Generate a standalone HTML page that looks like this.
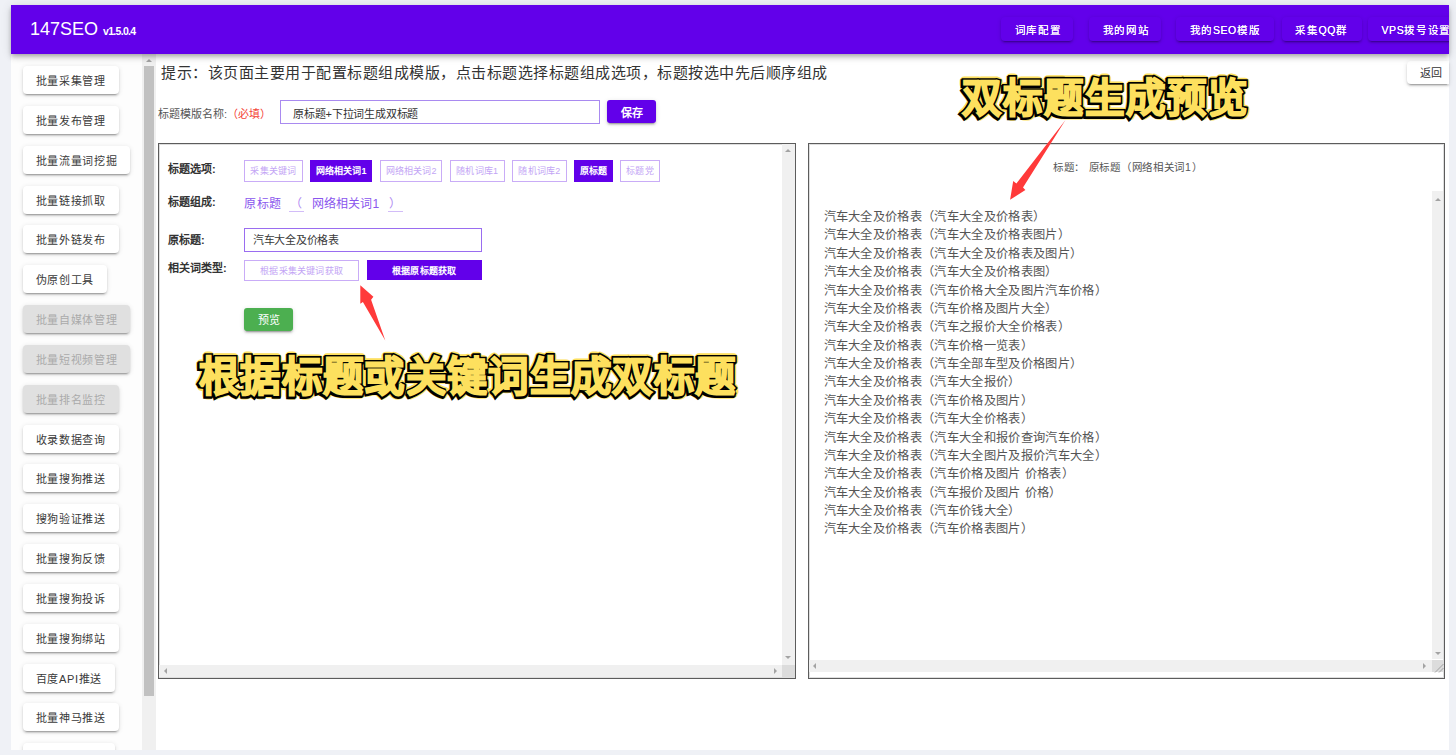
<!DOCTYPE html>
<html lang="zh-CN"><head><meta charset="utf-8">
<style>
*{box-sizing:border-box;margin:0;padding:0}
html,body{width:1456px;height:755px;overflow:hidden;background:#eff1f6;font-family:"Liberation Sans",sans-serif}
.abs{position:absolute}
#hdr{left:11px;top:5px;width:1438px;height:48.6px;overflow:hidden;background:#6200ea;box-shadow:0 2px 4px -1px rgba(0,0,0,.2),0 4px 5px 0 rgba(0,0,0,.14),0 1px 10px 0 rgba(0,0,0,.12);z-index:5}
#logo{left:19px;top:14px;color:#fff;font-size:18px;white-space:nowrap}
#logo small{font-size:10.5px;font-weight:bold;margin-left:5px;letter-spacing:-0.7px}
.hb{top:12px;height:24px;background:#6200ea;color:#fff;font-size:10.5px;font-weight:500;letter-spacing:1.7px;text-shadow:0 0 .5px #fff;border-radius:4px;box-shadow:0 3px 1px -2px rgba(0,0,0,.2),0 2px 2px 0 rgba(0,0,0,.14),0 1px 5px 0 rgba(0,0,0,.12);padding-left:13.5px;line-height:27px;white-space:nowrap}
#side{left:11px;top:53px;width:131px;height:697px;background:#fdfdfd}
#sbar{left:142px;top:53px;width:14px;height:697px;background:#f0f0f0}
#sthumb{left:144px;top:66px;width:10px;height:630px;background:#c1c1c1}
#main{left:156px;top:53px;width:1293px;height:697px;background:#fff}
.sb{left:22.5px;height:28px;background:#fff;border-radius:4px;font-size:11px;letter-spacing:.7px;color:#3a3a3a;line-height:30px;padding:0 13px;white-space:nowrap;box-shadow:0 3px 1px -2px rgba(0,0,0,.2),0 2px 2px 0 rgba(0,0,0,.14),0 1px 5px 0 rgba(0,0,0,.12)}
.sb.dis{background:#e0e0e0;color:#aaa}

.tip{left:161px;top:63px;font-size:15px;letter-spacing:0.5px;color:#333;white-space:nowrap;line-height:20px}
.lbl{font-size:11px;color:#555;white-space:nowrap}
.inp{border:1.5px solid #a98af0;background:#fff}
.btnp{background:#6200ea;color:#fff;font-weight:bold;font-size:11px;text-align:center;border-radius:3px;box-shadow:0 3px 1px -2px rgba(0,0,0,.2),0 2px 2px 0 rgba(0,0,0,.14),0 1px 5px 0 rgba(0,0,0,.12)}
.panel{border:1px solid #5c5c5c;background:#fff;box-shadow:inset 0 0 0 1px rgba(0,0,0,.13)}
.blbl{font-size:11px;font-weight:bold;color:#333;white-space:nowrap;line-height:14px}
.chip{top:160px;height:21.6px;border:1px solid #c9acf7;color:#c3a5f5;font-size:9px;letter-spacing:0.2px;text-align:center;line-height:20.8px;white-space:nowrap}
.chip.sel{background:#6200ea;border-color:#6200ea;color:#fff;font-weight:bold}
.vs{background:#f0f0f0}
.tri-up{width:0;height:0;border-left:3.5px solid transparent;border-right:3.5px solid transparent;border-bottom:3.5px solid #a3a3a3}
.tri-dn{width:0;height:0;border-left:3.5px solid transparent;border-right:3.5px solid transparent;border-top:3.5px solid #a3a3a3}
.tri-l{width:0;height:0;border-top:3.5px solid transparent;border-bottom:3.5px solid transparent;border-right:3.5px solid #a3a3a3}
.tri-r{width:0;height:0;border-top:3.5px solid transparent;border-bottom:3.5px solid transparent;border-left:3.5px solid #a3a3a3}
.res{left:823.5px;top:208px;font-size:12.25px;letter-spacing:0.33px;line-height:18.37px;color:#555;white-space:pre}
</style></head><body>
<div id="hdr" class="abs">
  <div id="logo" class="abs">147SEO<small>v1.5.0.4</small></div>
  <div class="hb abs" style="left:990px;width:72px">词库配置</div>
  <div class="hb abs" style="left:1078px;width:72px">我的网站</div>
  <div class="hb abs" style="left:1165px;width:97.5px">我的<span style="letter-spacing:.6px">SEO</span>模版</div>
  <div class="hb abs" style="left:1270.7px;width:80px">采集<span style="letter-spacing:.6px">QQ</span>群</div>
  <div class="hb abs" style="left:1357px;width:100px"><span style="letter-spacing:.6px">VPS</span>拨号设置</div>
</div>
<div id="side" class="abs"></div>
<div id="sbar" class="abs"></div>
<div id="sthumb" class="abs"></div>
<div class="abs tri-up" style="left:145.5px;top:59px"></div>
<div class="abs" style="left:155.5px;top:53px;width:1px;height:697px;background:#e6e6e6"></div>
<div id="main" class="abs"></div>
<div class="sb abs" style="top:66.00px">批量采集管理</div>
<div class="sb abs" style="top:105.84px">批量发布管理</div>
<div class="sb abs" style="top:145.68px">批量流量词挖掘</div>
<div class="sb abs" style="top:185.52px">批量链接抓取</div>
<div class="sb abs" style="top:225.36px">批量外链发布</div>
<div class="sb abs" style="top:265.20px">伪原创工具</div>
<div class="sb abs dis" style="top:305.04px">批量自媒体管理</div>
<div class="sb abs dis" style="top:344.88px">批量短视频管理</div>
<div class="sb abs dis" style="top:384.72px">批量排名监控</div>
<div class="sb abs" style="top:424.56px">收录数据查询</div>
<div class="sb abs" style="top:464.40px">批量搜狗推送</div>
<div class="sb abs" style="top:504.24px">搜狗验证推送</div>
<div class="sb abs" style="top:544.08px">批量搜狗反馈</div>
<div class="sb abs" style="top:583.92px">批量搜狗投诉</div>
<div class="sb abs" style="top:623.76px">批量搜狗绑站</div>
<div class="sb abs" style="top:663.60px">百度API推送</div>
<div class="sb abs" style="top:703.44px">批量神马推送</div>
<div class="sb abs" style="top:743.28px;width:92px">&nbsp;</div>

<div class="abs tip">提示：该页面主要用于配置标题组成模版，点击标题选择标题组成选项，标题按选中先后顺序组成</div>
<div class="abs" style="left:1407px;top:61px;width:42px;height:22.5px;background:#fff;border-radius:4px 0 0 4px;box-shadow:0 3px 1px -2px rgba(0,0,0,.2),0 2px 2px 0 rgba(0,0,0,.14),0 1px 5px 0 rgba(0,0,0,.12);font-size:11px;color:#333;line-height:24px;padding-left:13px">返回</div>
<div class="abs lbl" style="left:158px;top:105px">标题模版名称:<span style="color:#f44336">（必填）</span></div>
<div class="abs inp" style="left:280px;top:99.6px;width:319.5px;height:24.2px"></div>
<div class="abs lbl" style="left:293px;top:104.5px;color:#333;font-size:11px;letter-spacing:-0.18px">原标题+下拉词生成双标题</div>
<div class="abs btnp" style="left:607px;top:100.3px;width:49px;height:22.8px;line-height:26px">保存</div>

<div class="abs panel" style="left:158px;top:142.8px;width:637.8px;height:536.3px"></div>
<div class="abs vs" style="left:782px;top:143.8px;width:12.8px;height:521px"></div>
<div class="abs tri-up" style="left:784.8px;top:149px"></div>
<div class="abs tri-dn" style="left:784.8px;top:656px"></div>
<div class="abs vs" style="left:159px;top:665px;width:623px;height:12.3px"></div>
<div class="abs" style="left:782px;top:665px;width:12.8px;height:12.3px;background:#dcdcdc"></div>
<div class="abs tri-l" style="left:163.5px;top:668px"></div>
<div class="abs tri-r" style="left:773.5px;top:668px"></div>

<div class="abs blbl" style="left:168px;top:162px">标题选项:</div>
<div class="abs chip" style="left:244.2px;width:58.6px">采集关键词</div>
<div class="abs chip sel" style="left:310px;width:62.4px">网络相关词1</div>
<div class="abs chip" style="left:379.9px;width:62.6px">网络相关词2</div>
<div class="abs chip" style="left:450px;width:54.6px">随机词库1</div>
<div class="abs chip" style="left:512.2px;width:54.4px">随机词库2</div>
<div class="abs chip sel" style="left:574.2px;width:38.6px">原标题</div>
<div class="abs chip" style="left:620.2px;width:39.6px">标题党</div>

<div class="abs blbl" style="left:168px;top:194.5px">标题组成:</div>
<div class="abs" style="left:244.2px;top:197px;font-size:12px;letter-spacing:0.5px;color:#8a56ee;white-space:nowrap;line-height:15px">原标题</div>
<div class="abs" style="left:288.7px;top:195px;width:15.3px;height:17px;border-bottom:1px solid #d2bcf8;font-size:12px;color:#b08af2;line-height:19px;text-align:right;padding-right:2px">（</div>
<div class="abs" style="left:311.5px;top:197px;font-size:12px;letter-spacing:0.2px;color:#8a56ee;white-space:nowrap;line-height:15px">网络相关词1</div>
<div class="abs" style="left:387.5px;top:195px;width:15px;height:17px;border-bottom:1px solid #d2bcf8;font-size:12px;color:#b08af2;line-height:19px;padding-left:1.5px">）</div>

<div class="abs blbl" style="left:168px;top:233px">原标题:</div>
<div class="abs inp" style="left:244.2px;top:227.7px;width:237.5px;height:24.1px;border-color:#9a6df0"></div>
<div class="abs" style="left:253px;top:232.5px;font-size:11px;letter-spacing:-0.3px;color:#3a3a3a;white-space:nowrap;line-height:14px">汽车大全及价格表</div>

<div class="abs blbl" style="left:168px;top:261px">相关词类型:</div>
<div class="abs chip" style="left:244.2px;top:259.7px;width:114.9px;height:20.9px;line-height:21px;font-size:9px">根据采集关键词获取</div>
<div class="abs chip sel" style="left:366.8px;top:260.2px;width:114.9px;height:19.9px;line-height:21px;font-size:9px">根据原标题获取</div>

<div class="abs" style="left:244.2px;top:308px;width:48.7px;height:22.9px;background:#4caf50;border-radius:3px;color:#fff;font-size:11px;text-align:center;line-height:25px;box-shadow:0 3px 1px -2px rgba(0,0,0,.2),0 2px 2px 0 rgba(0,0,0,.14),0 1px 5px 0 rgba(0,0,0,.12)">预览</div>

<div class="abs panel" style="left:807.7px;top:142.8px;width:637.5px;height:536.3px"></div>
<div class="abs" style="left:1053px;top:160px;font-size:10.5px;letter-spacing:0.7px;color:#555;white-space:nowrap;line-height:14px">标题：&nbsp;原标题（网络相关词1）</div>
<div class="abs vs" style="left:1431.6px;top:191.4px;width:11.6px;height:468px"></div>
<div class="abs tri-up" style="left:1434.5px;top:197.5px"></div>
<div class="abs tri-dn" style="left:1434.5px;top:651.5px"></div>
<div class="abs vs" style="left:809px;top:659.5px;width:622.6px;height:12.5px"></div>
<div class="abs" style="left:1431.6px;top:659.5px;width:11.6px;height:12.5px;background:#dcdcdc"></div>
<div class="abs tri-l" style="left:813px;top:662.5px"></div>
<div class="abs tri-r" style="left:1422.5px;top:662.5px"></div>
<svg class="abs" style="left:1431.6px;top:659.5px" width="12" height="13"><path d="M3,12.5 L11.5,4 M7,12.5 L11.5,8" stroke="#9a9a9a" stroke-width="0.9" fill="none"/></svg>
<div class="abs res">汽车大全及价格表（汽车大全及价格表）
汽车大全及价格表（汽车大全及价格表图片）
汽车大全及价格表（汽车大全及价格表及图片）
汽车大全及价格表（汽车大全及价格表图）
汽车大全及价格表（汽车价格大全及图片汽车价格）
汽车大全及价格表（汽车价格及图片大全）
汽车大全及价格表（汽车之报价大全价格表）
汽车大全及价格表（汽车价格一览表）
汽车大全及价格表（汽车全部车型及价格图片）
汽车大全及价格表（汽车大全报价）
汽车大全及价格表（汽车价格及图片）
汽车大全及价格表（汽车大全价格表）
汽车大全及价格表（汽车大全和报价查询汽车价格）
汽车大全及价格表（汽车大全图片及报价汽车大全）
汽车大全及价格表（汽车价格及图片 价格表）
汽车大全及价格表（汽车报价及图片 价格）
汽车大全及价格表（汽车价钱大全）
汽车大全及价格表（汽车价格表图片）</div>

<svg class="abs" style="left:0;top:0;z-index:10" width="1456" height="755" viewBox="0 0 1456 755">
<g font-family="Liberation Sans, sans-serif" font-weight="900">
<g fill="#fde05e" stroke="#fde05e" stroke-width="8" stroke-linejoin="round"><text x="961.5" y="112" font-size="39.5" textLength="286" lengthAdjust="spacing">双标题生成预览</text></g>
<g fill="#000" stroke="#000" stroke-width="4.8" stroke-linejoin="miter" stroke-miterlimit="2" transform="translate(-0.8,1)"><text x="961.5" y="112" font-size="39.5" textLength="286" lengthAdjust="spacing">双标题生成预览</text></g>
<g fill="#000" stroke="#000" stroke-width="4.8" stroke-linejoin="miter" stroke-miterlimit="2"><text x="961.5" y="112" font-size="39.5" textLength="286" lengthAdjust="spacing">双标题生成预览</text></g>
<g fill="#fde05e" stroke="#fde05e" stroke-width="1.6" stroke-linejoin="miter" stroke-miterlimit="2"><text x="961.5" y="112" font-size="39.5" textLength="286" lengthAdjust="spacing">双标题生成预览</text></g>
<g fill="#fde05e" stroke="#fde05e" stroke-width="8" stroke-linejoin="round"><text x="199" y="391" font-size="40.5" textLength="536" lengthAdjust="spacing">根据标题或关键词生成双标题</text></g>
<g fill="#000" stroke="#000" stroke-width="4.8" stroke-linejoin="miter" stroke-miterlimit="2" transform="translate(-0.8,1)"><text x="199" y="391" font-size="40.5" textLength="536" lengthAdjust="spacing">根据标题或关键词生成双标题</text></g>
<g fill="#000" stroke="#000" stroke-width="4.8" stroke-linejoin="miter" stroke-miterlimit="2"><text x="199" y="391" font-size="40.5" textLength="536" lengthAdjust="spacing">根据标题或关键词生成双标题</text></g>
<g fill="#fde05e" stroke="#fde05e" stroke-width="1.6" stroke-linejoin="miter" stroke-miterlimit="2"><text x="199" y="391" font-size="40.5" textLength="536" lengthAdjust="spacing">根据标题或关键词生成双标题</text></g>
</g>
<path d="M360.3,285.2 L360.3,303.7 L362.9,301.9 L385.3,340.6 L371.1,299.8 L373.4,296.8 Z" fill="#ff3a3a"/>
<path d="M1010.1,199.7 L1013.2,180.9 L1016.4,183.5 L1065.5,119.9 L1023,187.5 L1025.4,189.9 Z" fill="#ff3a3a"/>
</svg>
<div class="abs" style="left:0;top:750px;width:1456px;height:5px;background:#eff1f6;z-index:3"></div>
</body></html>
